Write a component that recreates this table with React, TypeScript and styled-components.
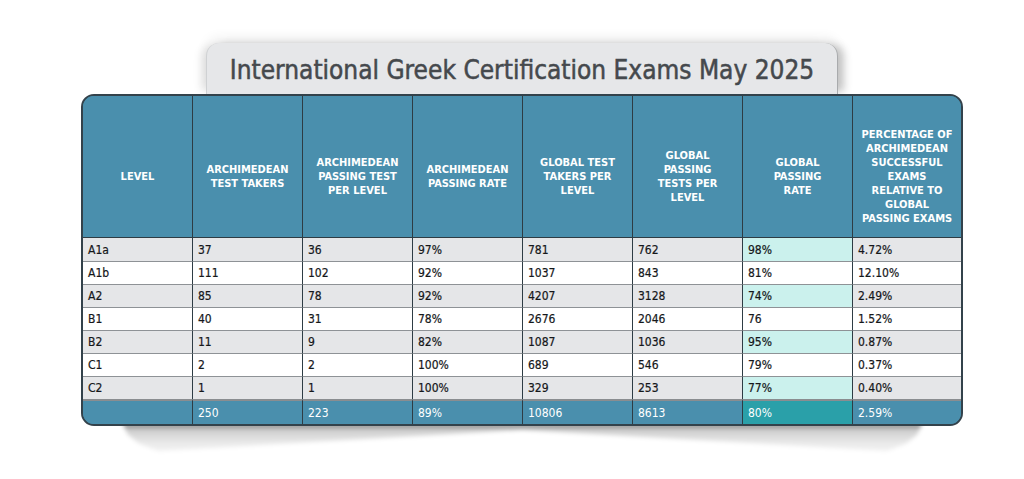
import React from "react";
import styled, { createGlobalStyle } from "styled-components";

const Global = createGlobalStyle`
  html, body { margin: 0; padding: 0; background: #ffffff; }
  body { font-family: "DejaVu Sans Condensed", "DejaVu Sans", sans-serif; }
`;

const Stage = styled.div`
  width: 1024px;
  height: 479px;
  box-sizing: border-box;
  padding: 43px 0 0 20px;
  display: flex;
  flex-direction: column;
  align-items: center;
  overflow: hidden;
`;

const TitleTab = styled.div`
  width: 632px;
  height: 51px;
  box-sizing: border-box;
  background: #e6e7e9;
  border-radius: 13px 13px 0 0;
  border-right: 1px solid #a9abad;
  border-left: 1px solid #cfd1d3;
  display: flex;
  align-items: center;
  justify-content: center;
  box-shadow: 8px 0 8px -2px rgba(0, 0, 0, 0.22), -8px 0 9px -3px rgba(0, 0, 0, 0.1),
    0 -6px 12px rgba(0, 0, 0, 0.06);
  position: relative;
  z-index: 0;
`;

const Title = styled.h1`
  margin: 0;
  padding-top: 2px;
  font-family: "DejaVu Sans Condensed", "DejaVu Sans", sans-serif;
  font-weight: 400;
  font-size: 26px;
  color: #45494d;
  -webkit-text-stroke: 0.5px #45494d;
  white-space: nowrap;
`;

const TableArea = styled.div`
  position: relative;
  width: 882px;
  z-index: 1;
`;

const Shadow = styled.div`
  position: absolute;
  left: 42px;
  right: 41px;
  top: calc(100% - 2px);
  height: 30px;
  filter: blur(2px);
  z-index: -1;
  &::before {
    content: "";
    position: absolute;
    inset: 0;
    background: linear-gradient(
      to bottom,
      rgba(0, 0, 0, 0.6) 0%,
      rgba(0, 0, 0, 0.2) 18%,
      rgba(0, 0, 0, 0.09) 60%,
      rgba(0, 0, 0, 0.04) 100%
    );
    clip-path: polygon(
      0 0,
      100% 0,
      99.4% 35%,
      98% 65%,
      95.6% 90%,
      50% 20%,
      4.4% 90%,
      2% 65%,
      0.6% 35%
    );
  }
`;

const Frame = styled.div`
  position: relative;
  width: 882px;
  box-sizing: border-box;
  border: 2px solid #33424b;
  border-radius: 13px;
  overflow: hidden;
  background: #4a8fad;
`;

const Table = styled.table`
  width: 878px;
  table-layout: fixed;
  border-collapse: separate;
  border-spacing: 0;
  font-family: "DejaVu Sans Condensed", "DejaVu Sans", sans-serif;
`;

const HeadCell = styled.th<{ $last?: boolean }>`
  height: 142px;
  box-sizing: border-box;
  padding: 20px 3px 0;
  background: #4a8fad;
  color: #ffffff;
  font-size: 11px;
  font-weight: 700;
  line-height: 14px;
  text-align: center;
  vertical-align: middle;
  border-right: ${(p) => (p.$last ? "none" : "1px solid #2e3c44")};
  border-bottom: 1px solid #2e3c44;
`;

const Row = styled.tr<{ $shade: boolean }>`
  background: ${(p) => (p.$shade ? "#e5e6e8" : "#ffffff")};
`;

const Cell = styled.td<{ $last?: boolean; $hl?: boolean; $first?: boolean }>`
  height: 23px;
  box-sizing: border-box;
  padding: 0 5px;
  font-size: 12px;
  color: #15171a;
  -webkit-text-stroke: 0.2px #15171a;
  background: ${(p) => (p.$hl ? "#cbf1ed" : "transparent")};
  border-right: ${(p) => (p.$last ? "none" : "1px solid #2e3c44")};
  border-top: ${(p) => (p.$first ? "none" : "1px solid #8e9296")};
  vertical-align: middle;
  white-space: nowrap;
`;

const TotalCell = styled.td<{ $last?: boolean; $hl?: boolean }>`
  height: 25px;
  box-sizing: border-box;
  padding: 0 5px;
  font-size: 12px;
  color: #ffffff;
  background: ${(p) => (p.$hl ? "#2aa0a9" : "#4a8fad")};
  border-right: ${(p) => (p.$last ? "none" : "1px solid #2e3c44")};
  border-top: 2px solid #8a8d90;
  vertical-align: middle;
  white-space: nowrap;
`;

const headers: string[][] = [
  ["LEVEL"],
  ["ARCHIMEDEAN", "TEST TAKERS"],
  ["ARCHIMEDEAN", "PASSING TEST", "PER LEVEL"],
  ["ARCHIMEDEAN", "PASSING RATE"],
  ["GLOBAL TEST", "TAKERS PER", "LEVEL"],
  ["GLOBAL", "PASSING", "TESTS PER", "LEVEL"],
  ["GLOBAL", "PASSING", "RATE"],
  [
    "PERCENTAGE OF",
    "ARCHIMEDEAN",
    "SUCCESSFUL",
    "EXAMS",
    "RELATIVE TO",
    "GLOBAL",
    "PASSING EXAMS",
  ],
];

const rows: string[][] = [
  ["A1a", "37", "36", "97%", "781", "762", "98%", "4.72%"],
  ["A1b", "111", "102", "92%", "1037", "843", "81%", "12.10%"],
  ["A2", "85", "78", "92%", "4207", "3128", "74%", "2.49%"],
  ["B1", "40", "31", "78%", "2676", "2046", "76", "1.52%"],
  ["B2", "11", "9", "82%", "1087", "1036", "95%", "0.87%"],
  ["C1", "2", "2", "100%", "689", "546", "79%", "0.37%"],
  ["C2", "1", "1", "100%", "329", "253", "77%", "0.40%"],
];

const totals = ["", "250", "223", "89%", "10806", "8613", "80%", "2.59%"];

const widths = [110, 110, 110, 110, 110, 110, 110, 108];

export default function App() {
  return (
    <>
      <Global />
      <Stage>
        <TitleTab>
          <Title>International Greek Certification Exams May 2025</Title>
        </TitleTab>
        <TableArea>
          <Shadow />
          <Frame>
            <Table>
              <colgroup>
                {widths.map((w, i) => (
                  <col key={i} style={{ width: w }} />
                ))}
              </colgroup>
              <thead>
                <tr>
                  {headers.map((h, i) => (
                    <HeadCell key={i} $last={i === headers.length - 1}>
                      {h.map((line, j) => (
                        <React.Fragment key={j}>
                          {line}
                          {j < h.length - 1 && <br />}
                        </React.Fragment>
                      ))}
                    </HeadCell>
                  ))}
                </tr>
              </thead>
              <tbody>
                {rows.map((r, ri) => (
                  <Row key={ri} $shade={ri % 2 === 0}>
                    {r.map((v, ci) => (
                      <Cell
                        key={ci}
                        $first={ri === 0}
                        $last={ci === r.length - 1}
                        $hl={ci === 6 && ri % 2 === 0}
                      >
                        {v}
                      </Cell>
                    ))}
                  </Row>
                ))}
                <tr>
                  {totals.map((v, ci) => (
                    <TotalCell key={ci} $last={ci === totals.length - 1} $hl={ci === 6}>
                      {v}
                    </TotalCell>
                  ))}
                </tr>
              </tbody>
            </Table>
          </Frame>
        </TableArea>
      </Stage>
    </>
  );
}
